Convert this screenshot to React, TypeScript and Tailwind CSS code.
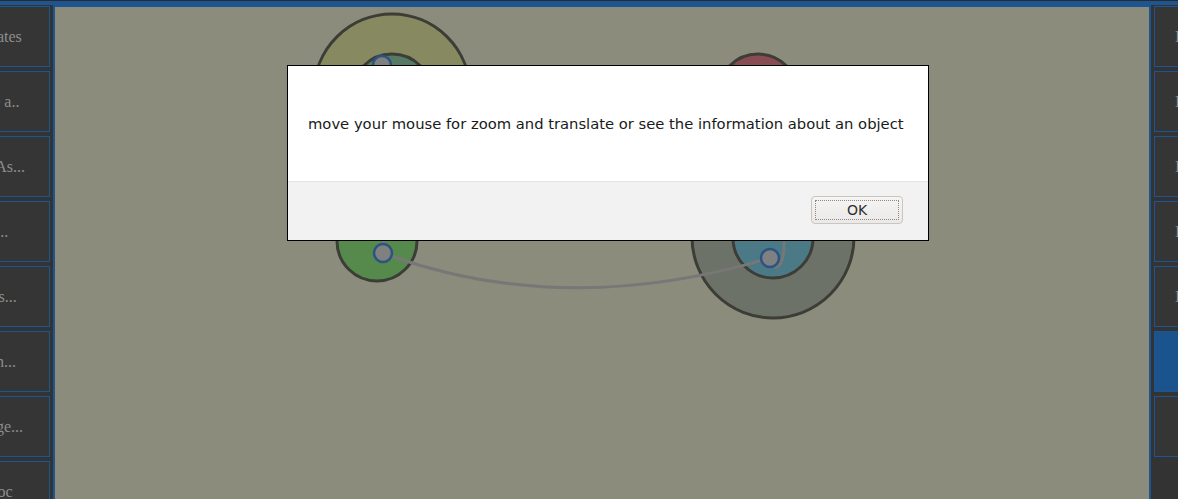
import React from "react"

const leftItems = [
  "Templates",
  "Create a..",
  "Saved As...",
  "Edit...",
  "Layers...",
  "Plugin...",
  "Message...",
  "Apidoc",
]

const rightItems = ["Item", "Item", "Item", "Item", "Item", "", ""]

function SideButton({ label, active, align }: { label: string; active?: boolean; align: "left" | "right" }) {
  return (
    <div
      className={
        (active ? "bg-[#1b548c] " : "bg-[#353535] ") +
        "h-[61px] shrink-0 border border-[#1d5591] flex items-center text-[16px] text-[#8d8d8d] whitespace-nowrap " +
        (align === "left" ? "w-[122px] justify-center" : "w-[120px] pl-[20px]")
      }
      style={{ fontFamily: '"Liberation Serif", "DejaVu Serif", serif' }}
    >
      {label}
    </div>
  )
}

function Diagram() {
  const edge = "#3d3d38"
  const ring = "#2b5383"
  return (
    <svg className="absolute inset-0 h-full w-full" viewBox="55 7 1094 492" preserveAspectRatio="none">
      {/* upper-left node */}
      <circle cx={392} cy={92} r={78} fill="#878a60" stroke={edge} strokeWidth={3} />
      <circle cx={392} cy={94} r={40} fill="#567a64" stroke={edge} strokeWidth={3} />
      {/* lower-left node */}
      <circle cx={377} cy={241} r={40} fill="#558a4c" stroke={edge} strokeWidth={3} />
      {/* red node */}
      <circle cx={758} cy={94} r={40} fill="#8a4c53" stroke={edge} strokeWidth={3} />
      {/* right node */}
      <circle cx={773} cy={237} r={81} fill="#6d7268" stroke={edge} strokeWidth={3} />
      <circle cx={773} cy={238} r={40} fill="#4b7a86" stroke={edge} strokeWidth={3} />

      {/* links */}
      <path d="M383 253 Q563 320 770 258" fill="none" stroke="#777777" strokeWidth={3} />
      <path d="M383 253 C386 200 382 120 382 65" fill="none" stroke="#777777" strokeWidth={3} />
      <path d="M770 258 C774 276 785 266 784 240 L778 150 L760 96" fill="none" stroke="#777777" strokeWidth={3} />

      {/* ports */}
      <circle cx={382} cy={65} r={9} fill="#808080" stroke={ring} strokeWidth={2.5} />
      <circle cx={383} cy={253} r={9} fill="#808080" stroke={ring} strokeWidth={2.5} />
      <circle cx={770} cy={258} r={9} fill="#808080" stroke={ring} strokeWidth={2.5} />
    </svg>
  )
}

export default function App() {
  return (
    <div className="relative h-[499px] w-full overflow-hidden bg-[#333333] flex flex-col">
      <div className="h-[1px] shrink-0 bg-[#2b2b2b]" />
      <div className="h-[4px] shrink-0 bg-[#1d5591]" />

      <div className="flex flex-1 min-h-0">
        {/* left toolbar */}
        <div className="w-[53px] shrink-0 overflow-hidden pt-[1px] pr-[3px] flex flex-col items-end gap-[4px]">
          {leftItems.map((l, i) => (
            <SideButton key={i} label={l} align="left" />
          ))}
        </div>

        {/* canvas */}
        <div className="relative flex-1 border-2 border-b-0 border-[#1d5591] bg-[#8b8c7c]">
          <Diagram />
        </div>

        {/* right toolbar */}
        <div className="w-[27px] shrink-0 overflow-hidden pt-[1px] pl-[3px] flex flex-col gap-[4px]">
          {rightItems.map((l, i) => (
            <SideButton key={i} label={l} active={i === 5} align="right" />
          ))}
        </div>
      </div>

      {/* message dialog */}
      <div
        className="absolute left-[287px] top-[65px] w-[642px] h-[176px] border border-black bg-white flex flex-col"
        style={{ fontFamily: '"DejaVu Sans", "Noto Sans", sans-serif' }}
      >
        <div className="flex-1 flex items-center px-[20px] pt-[1px] text-[14.75px] text-[#1a1a1a] whitespace-nowrap">
          move your mouse for zoom and translate or see the information about an object
        </div>
        <div className="h-[59px] shrink-0 border-t border-[#e4e4e4] bg-[#f2f2f2] flex items-center justify-end pr-[25px] pb-[2px]">
          <button className="h-[28px] w-[92px] rounded-[4px] border border-[#c9c5bf] bg-gradient-to-b from-[#f6f5f4] to-[#ebe9e7] p-[3px]">
            <span className="flex h-full w-full items-center justify-center border border-dotted border-[#8a8a8a] text-[14px] text-[#2e2e2e]">
              OK
            </span>
          </button>
        </div>
      </div>
    </div>
  )
}
